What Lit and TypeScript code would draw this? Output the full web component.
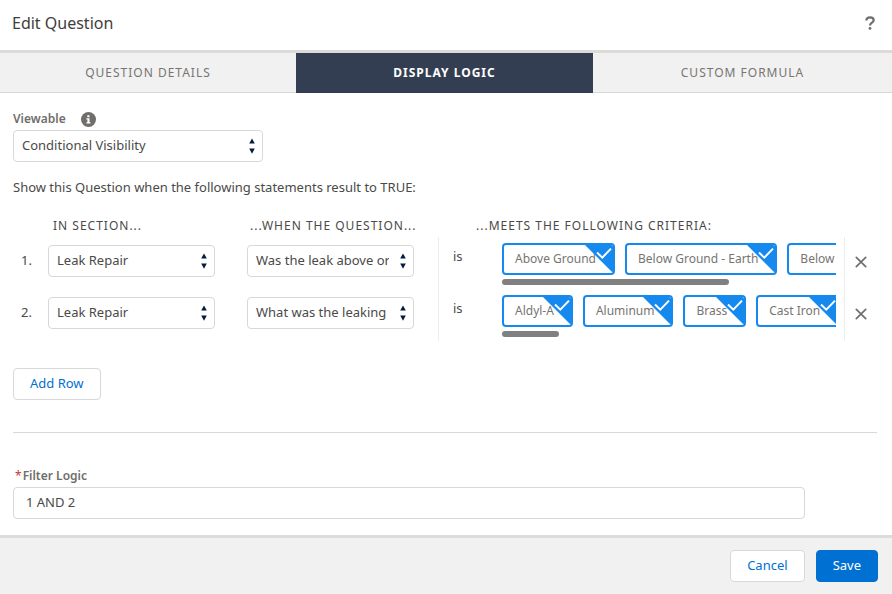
import { LitElement, html, css, svg } from "lit";
import { customElement, state } from "lit/decorators.js";

interface Criterion {
  section: string;
  question: string;
  answers: string[];
  thumb: number;
}

const tabs = ["Question Details", "Display Logic", "Custom Formula"];

const arrows = html`<svg class="arrows" width="6" height="16" viewBox="0 0 6 16" aria-hidden="true">
  ${svg`<path d="M3 0.4 5.8 5.6H0.2z M0.2 10.6H5.8L3 15.8z" fill="#061c3f"/>`}
</svg>`;

@customElement("app-root")
export class AppRoot extends LitElement {
  @state() private active = 1;

  @state() private rows: Criterion[] = [
    {
      section: "Leak Repair",
      question: "Was the leak above or below ground?",
      answers: ["Above Ground", "Below Ground - Earth", "Below Ground - Pavement"],
      thumb: 68,
    },
    {
      section: "Leak Repair",
      question: "What was the leaking component made of?",
      answers: ["Aldyl-A", "Aluminum", "Brass", "Cast Iron"],
      thumb: 17,
    },
  ];

  static styles = css`
    :host {
      display: flex;
      flex-direction: column;
      min-height: 100vh;
      background: #fff;
      color: #4a4a48;
      font: 13px/20px "Noto Sans", "Open Sans", sans-serif;
    }
    * {
      box-sizing: border-box;
    }
    button,
    input,
    select {
      font: inherit;
      color: inherit;
      margin: 0;
    }
    button {
      cursor: pointer;
    }
    .head {
      display: flex;
      align-items: center;
      justify-content: space-between;
      height: 53px;
      padding: 0 12px;
      padding-bottom: 4px;
      border-bottom: 3px solid #dddbda;
    }
    .title {
      margin: 0;
      font-size: 16px;
      font-weight: 400;
      color: #3e3e3c;
    }
    .help,
    .remove {
      display: flex;
      align-items: center;
      justify-content: center;
      padding: 0;
      border: 0;
      background: none;
    }
    .help {
      width: 20px;
      height: 20px;
    }
    .tabs {
      display: grid;
      grid-template-columns: 296fr 297fr 299fr;
      height: 40px;
    }
    .tab {
      border: 0;
      border-bottom: 1px solid #d8d8d8;
      padding: 0;
      background: #f1f1f1;
      color: #777572;
      font-size: 12px;
      letter-spacing: 1px;
      text-transform: uppercase;
    }
    .tab.on {
      background: #343e52;
      border-color: #343e52;
      color: #fff;
      font-weight: 700;
    }
    .body {
      flex: 1;
      padding: 16px 15px 16px 13px;
    }
    .label {
      display: flex;
      align-items: center;
      height: 20px;
      margin-bottom: 1px;
      font-size: 12px;
      font-weight: 600;
      color: #706e6b;
    }
    .label svg {
      margin-left: 15px;
    }
    .required {
      margin: 0 1px 0 2px;
      color: #c23934;
      font-weight: 400;
    }
    .viewable {
      max-width: 250px;
    }
    .pick {
      position: relative;
      display: block;
    }
    .select {
      display: block;
      width: 100%;
      height: 32px;
      padding: 0 24px 2px 8px;
      border: 1px solid #d8d8d8;
      border-radius: 4px;
      background: #fff;
      appearance: none;
    }
    .arrows {
      position: absolute;
      right: 8px;
      top: 8px;
      pointer-events: none;
    }
    .intro {
      margin: 15px 0 19px;
    }
    .row {
      display: grid;
      grid-template-columns: 35px 199fr 191fr 407fr 32px;
      height: 52px;
    }
    .row.names {
      height: 21px;
      font-size: 12px;
      letter-spacing: 1px;
      text-transform: uppercase;
      white-space: nowrap;
    }
    .names .first {
      grid-column: 2;
      padding-left: 5px;
    }
    .names .second {
      padding-left: 3px;
    }
    .names .third {
      padding-left: 38px;
    }
    .number {
      padding: 13px 0 0 8px;
    }
    .cell {
      padding: 8px 32px 0 0;
      min-width: 0;
    }
    .cell.narrow {
      padding-right: 24px;
    }
    .criteria {
      display: flex;
      min-width: 0;
      padding: 6px 8px 0 14px;
      border: solid #ededed;
      border-width: 0 1px;
    }
    .is {
      flex: none;
      width: 49px;
      padding-top: 3px;
    }
    .scroller {
      flex: 1;
      min-width: 0;
    }
    .pills {
      display: flex;
      gap: 10px;
      overflow: hidden;
    }
    .pill {
      position: relative;
      flex: none;
      height: 32px;
      padding: 4px 17px 0 11px;
      border: 2px solid #1589ee;
      border-radius: 4px;
      overflow: hidden;
      color: #777572;
      font-size: 12px;
      white-space: nowrap;
      cursor: pointer;
    }
    .pill input {
      position: absolute;
      opacity: 0;
    }
    .pill svg {
      position: absolute;
      top: -1px;
      right: -1px;
      visibility: hidden;
    }
    .pill input:checked ~ svg {
      visibility: visible;
    }
    .thumb {
      height: 6px;
      margin-top: 4px;
      border-radius: 3px;
      background: #808080;
    }
    .remove {
      width: 32px;
      height: 50px;
    }
    .button {
      height: 32px;
      padding: 0 16px 2px;
      border: 1px solid #d8d8d8;
      border-radius: 4px;
      background: #fff;
      color: #0070d2;
    }
    .button.brand {
      border-color: #0070d2;
      background: #0070d2;
      color: #fff;
    }
    .add {
      margin-top: 27px;
    }
    .rule {
      margin: 32px 0 33px;
      border: 0;
      border-top: 1px solid #d8d8d8;
    }
    .logic {
      display: block;
      width: 91.7%;
      height: 32px;
      padding: 0 12px 2px;
      border: 1px solid #d8d8d8;
      border-radius: 4px;
      background: #fff;
    }
    .foot {
      display: flex;
      justify-content: flex-end;
      gap: 11px;
      padding: 12px 14px;
      border-top: 3px solid #dcdcdc;
      background: #f1f1f1;
    }
  `;

  private select(label: string, value: string) {
    return html`<span class="pick">
      <select class="select" aria-label=${label}><option>${value}</option></select>
      ${arrows}
    </span>`;
  }

  private pill(text: string) {
    return html`<label class="pill">
      <input type="checkbox" checked />
      <span>${text}</span>
      <svg width="30" height="30" viewBox="0 0 30 30" aria-hidden="true">
        <path d="M0 0H30V30z" fill="#1589ee" />
        <path d="M13 8.5 18.3 13.6 27 4.6" fill="none" stroke="#fff" stroke-width="2" />
      </svg>
    </label>`;
  }

  private addRow() {
    this.rows = [...this.rows, { section: "", question: "", answers: [], thumb: 0 }];
  }

  private removeRow(index: number) {
    this.rows = this.rows.filter((_, i) => i !== index);
  }

  render() {
    return html`
      <header class="head">
        <h1 class="title">Edit Question</h1>
        <button class="help" aria-label="Help">
          <svg width="10" height="14" viewBox="0 0 10 14" aria-hidden="true">
            <path d="M1.3 4.6C1.3 2.4 2.8 1.3 5 1.3S8.7 2.4 8.7 4.2C8.7 6.6 5 6.6 5 9.4" fill="none" stroke="#706e6b" stroke-width="2.2" />
            <circle cx="5" cy="12.4" r="1.4" fill="#706e6b" />
          </svg>
        </button>
      </header>
      <nav class="tabs" role="tablist">
        ${tabs.map(
          (name, i) => html`<button
            class=${i === this.active ? "tab on" : "tab"}
            role="tab"
            aria-selected=${i === this.active}
            @click=${() => (this.active = i)}
          >${name}</button>`,
        )}
      </nav>
      <main class="body">
        <div class="viewable">
          <label class="label" for="viewable">
            Viewable
            <svg width="15" height="15" viewBox="0 0 15 15" aria-hidden="true">
              <circle cx="7.5" cy="7.5" r="7.5" fill="#706e6b" />
              <path d="M6.3 3.2h2.2v2H6.3z M5.4 6.2h3.1v4h1v1.3H5.4v-1.3h1V7.5h-1z" fill="#fff" />
            </svg>
          </label>
          <span class="pick">
            <select class="select" id="viewable"><option>Conditional Visibility</option></select>
            ${arrows}
          </span>
        </div>
        <p class="intro">Show this Question when the following statements result to TRUE:</p>
        <div class="row names">
          <span class="first">In section...</span>
          <span class="second">...when the question...</span>
          <span class="third">...meets the following criteria:</span>
        </div>
        ${this.rows.map(
          (row, i) => html`<div class="row">
            <span class="number">${i + 1}.</span>
            <div class="cell">${this.select("Section", row.section)}</div>
            <div class="cell narrow">${this.select("Question", row.question)}</div>
            <div class="criteria">
              <span class="is">is</span>
              <div class="scroller">
                <div class="pills">${row.answers.map((a) => this.pill(a))}</div>
                <div class="thumb" style="width:${row.thumb}%"></div>
              </div>
            </div>
            <button class="remove" aria-label="Remove row" @click=${() => this.removeRow(i)}>
              <svg width="12" height="12" viewBox="0 0 12 12" aria-hidden="true">
                <path d="M1.3 1.3 10.7 10.7M10.7 1.3 1.3 10.7" stroke="#706e6b" stroke-width="1.7" stroke-linecap="round" />
              </svg>
            </button>
          </div>`,
        )}
        <button class="button add" @click=${this.addRow}>Add Row</button>
        <hr class="rule" />
        <label class="label" for="logic"><span class="required">*</span>Filter Logic</label>
        <input class="logic" id="logic" type="text" value="1 AND 2" />
      </main>
      <footer class="foot">
        <button class="button">Cancel</button>
        <button class="button brand">Save</button>
      </footer>
    `;
  }
}
